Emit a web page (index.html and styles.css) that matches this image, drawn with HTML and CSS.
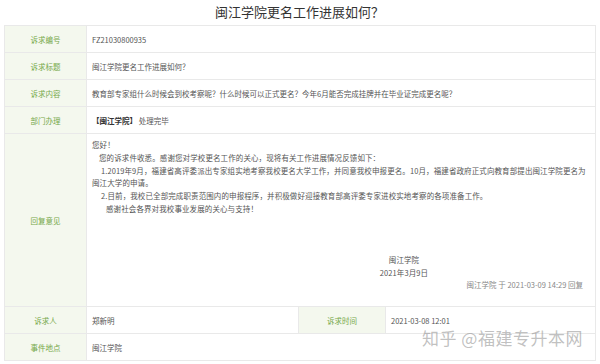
FILE: index.html
```html
<!DOCTYPE html>
<html lang="zh-CN">
<head>
    <meta charset="UTF-8">
    <meta name="viewport" content="width=device-width, initial-scale=1.0">
    <title>闽江学院更名工作进展如何？</title>
    <link rel="stylesheet" href="styles.css">
</head>
<body>
    <div class="page">
        <h1 class="title">闽江学院更名工作进展如何？</h1>

        <table class="detail">
            <colgroup>
                <col class="c-label">
                <col class="c-value">
                <col class="c-label2">
                <col class="c-value2">
            </colgroup>
            <tr>
                <th>诉求编号</th>
                <td colspan="3">FZ21030800935</td>
            </tr>
            <tr>
                <th>诉求标题</th>
                <td colspan="3">闽江学院更名工作进展如何？</td>
            </tr>
            <tr>
                <th>诉求内容</th>
                <td colspan="3">教育部专家组什么时候会到校考察呢？什么时候可以正式更名？今年6月能否完成挂牌并在毕业证完成更名呢？</td>
            </tr>
            <tr>
                <th>部门办理</th>
                <td colspan="3"><b class="dept">【闽江学院】</b> 处理完毕</td>
            </tr>
            <tr class="reply-row">
                <th>回复意见</th>
                <td colspan="3" class="reply">
                    <p>您好！</p>
                    <p class="ind1">您的诉求件收悉。感谢您对学校更名工作的关心，现将有关工作进展情况反馈如下：</p>
                    <p class="ind2">1.2019年9月，福建省高评委派出专家组实地考察我校更名大学工作，并同意我校申报更名。10月，福建省政府正式向教育部提出闽江学院更名为</p>
                    <p>闽江大学的申请。</p>
                    <p class="ind2">2.目前，我校已全部完成职责范围内的申报程序，并积极做好迎接教育部高评委专家进校实地考察的各项准备工作。</p>
                    <p class="ind3">感谢社会各界对我校事业发展的关心与支持！</p>

                    <div class="sign">
                        <p>闽江学院</p>
                        <p>2021年3月9日</p>
                    </div>
                    <p class="meta">闽江学院 于 2021-03-09 14:29 回复</p>
                </td>
            </tr>
            <tr>
                <th>诉求人</th>
                <td>郑新明</td>
                <th>诉求时间</th>
                <td>2021-03-08 12:01</td>
            </tr>
            <tr>
                <th>事件地点</th>
                <td colspan="3">闽江学院</td>
            </tr>
        </table>

        <div class="watermark">知乎 @福建专升本网</div>
    </div>
</body>
</html>
```

FILE: styles.css
```css
body {
    margin: 0;
    background: #fff;
    font-family: "Noto Sans CJK SC", "Noto Sans", sans-serif;
    color: #555;
}

.page {
    position: relative;
    padding: 0 5px 0 4px;
}

.title {
    margin: 0;
    height: 25px;
    line-height: 24px;
    font-size: 13px;
    font-weight: normal;
    color: #333;
    text-align: center;
}

.detail {
    width: 591px;
    table-layout: fixed;
    border-collapse: collapse;
    border: 1px solid #e9e9e9;
    font-size: 7.5px;
}

.c-label { width: 82px; }
.c-value { width: 212px; }
.c-label2 { width: 87px; }
.c-value2 { width: 210px; }

.detail th,
.detail td {
    height: 26px;
    padding: 0 0 0 5px;
    border: 1px solid #e9e9e9;
    vertical-align: middle;
    text-align: left;
}

.detail th {
    padding: 0;
    background: #f4f8ee;
    color: #76a84a;
    font-weight: normal;
    text-align: center;
}

.dept {
    color: #333;
    font-weight: bold;
}

.reply-row th,
.reply-row td {
    height: 167px;
}

.reply {
    vertical-align: top !important;
    padding-top: 5px !important;
}

.reply p {
    margin: 0;
    line-height: 12.8px;
    letter-spacing: 0.1px;
}

.reply .ind1 { padding-left: 7px; }
.reply .ind2 { padding-left: 9px; }
.reply .ind3 { padding-left: 14px; }

.sign {
    margin-top: 38px;
    margin-left: 281px;
    width: 62px;
    text-align: center;
    color: #555;
}

.reply .meta {
    margin-top: 0;
    padding-right: 12px;
    text-align: right;
    color: #888;
    letter-spacing: 0;
}

.watermark {
    position: absolute;
    left: 422px;
    top: 325px;
    font-size: 17px;
    color: rgba(140, 140, 140, 0.55);
    letter-spacing: 0.5px;
}
```
